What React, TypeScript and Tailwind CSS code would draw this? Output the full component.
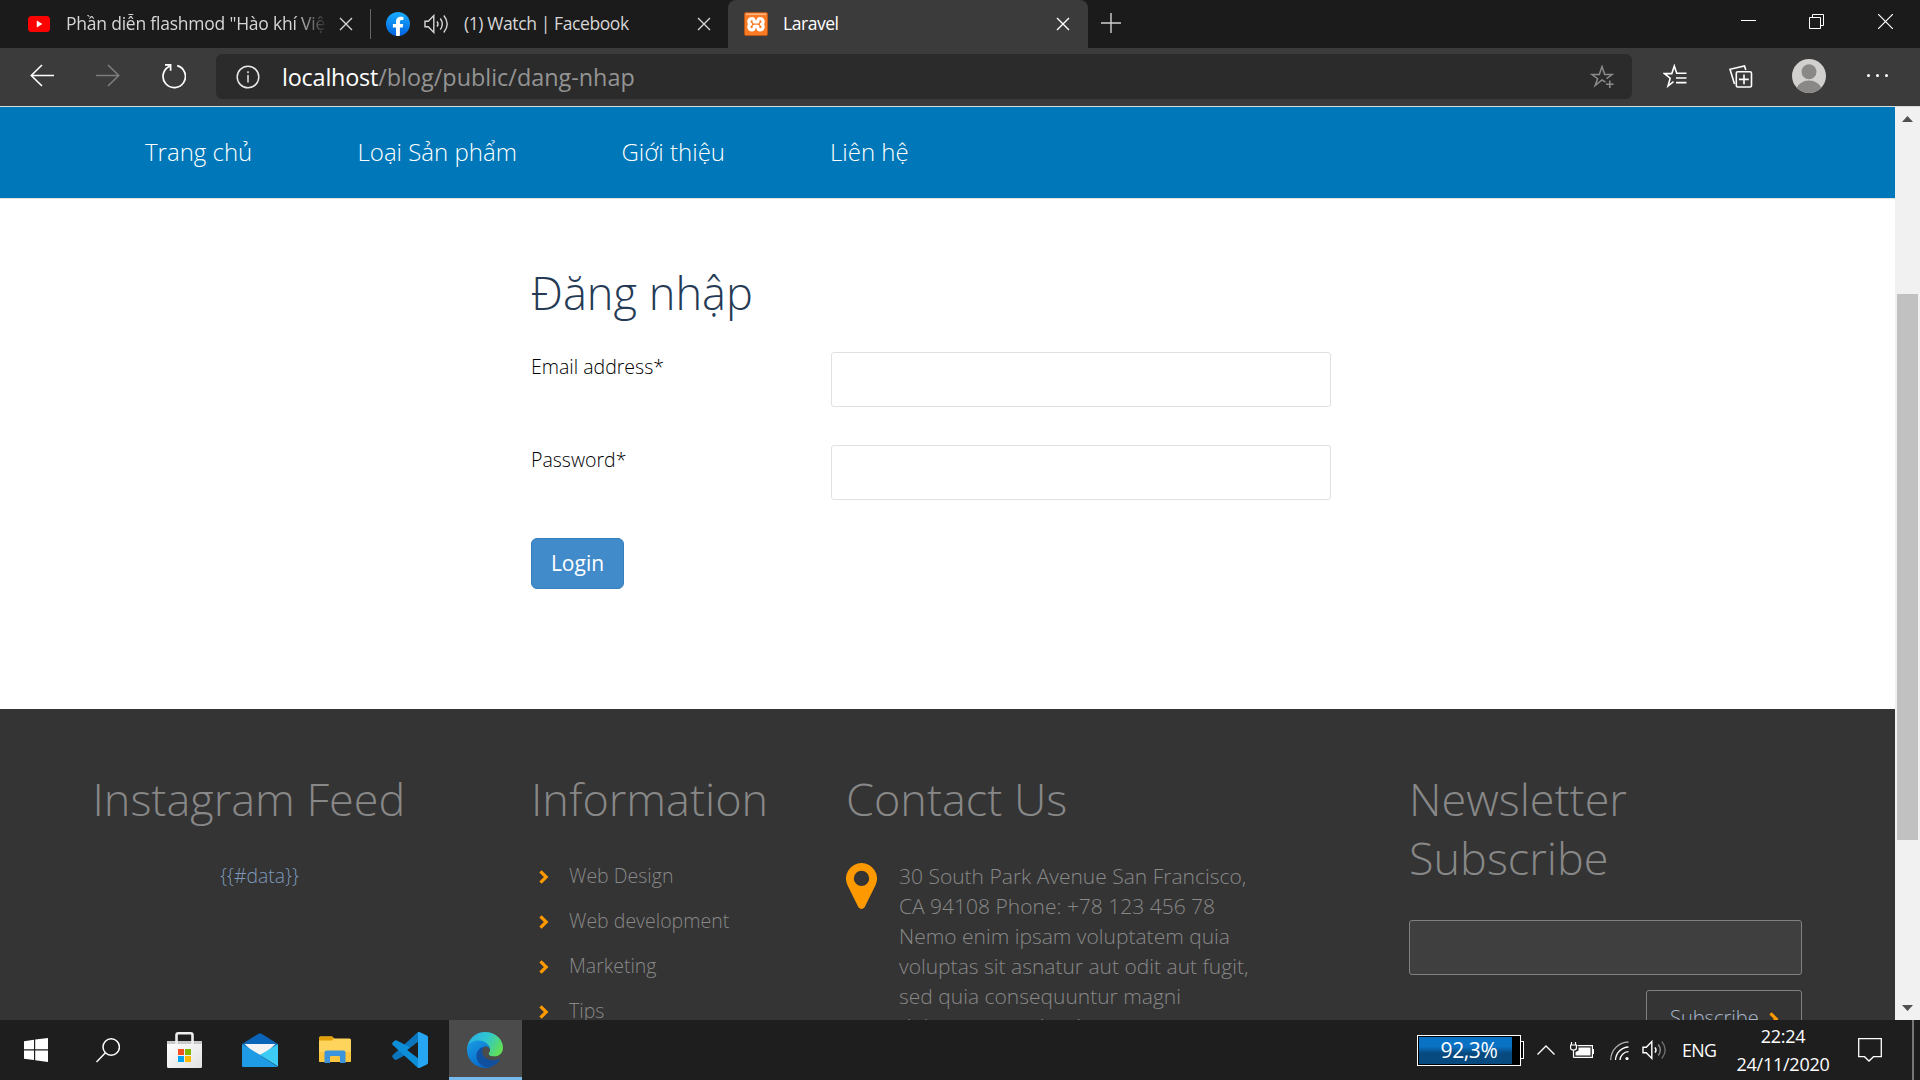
import React from "react";

function CloseIcon({ className }: { className: string }) {
  return (
    <svg className={className} viewBox="0 0 14 14" fill="none" stroke="currentColor" strokeWidth="1.4">
      <path d="M1 1 13 13M13 1 1 13" />
    </svg>
  );
}

function SoundIcon({ className, dim }: { className: string; dim?: boolean }) {
  return (
    <svg className={className} viewBox="0 0 25 20" fill="none" stroke="currentColor" strokeWidth="1.4">
      <path d="M1 7.2H4.3L9.8 1.6V18.4L4.3 12.8H1Z" />
      <path d="M13 7.3Q15 10 13 12.7" />
      <path d="M16.3 4.5Q20.3 10 16.3 15.5" opacity={dim ? 0.5 : 1} />
      <path d="M19.8 1.5Q26.6 10 19.8 18.5" opacity={dim ? 0.35 : 1} />
    </svg>
  );
}

function TabStrip() {
  return (
    <div className="flex h-12 items-start bg-[#1b1b1b] text-[17.5px] leading-[46px] text-[#d6d6d6]">
      <div className="flex h-12 w-[370px] items-center pl-7">
        <svg className="h-4 w-[22px]" viewBox="0 0 22 16">
          <rect width="22" height="16" rx="3.5" fill="#f00" />
          <path d="M8.8 4.6 14.3 8 8.8 11.4Z" fill="#fff" />
        </svg>
        <div className="ml-4 h-12 w-[260px] overflow-hidden whitespace-nowrap tracking-[-0.22px] [mask-image:linear-gradient(to_right,black_88%,transparent_101%)]">
          Phần diễn flashmod "Hào khí Việ
        </div>
        <CloseIcon className="ml-[13px] h-3.5 w-3.5" />
      </div>
      <div className="mt-[9px] h-[30px] w-px bg-[#666]" />
      <div className="flex h-12 w-[357px] items-center pl-[15px]">
        <svg className="h-6 w-6" viewBox="0 0 24 24">
          <defs>
            <linearGradient id="fb" x1="0" y1="0" x2="0" y2="1">
              <stop offset="0" stopColor="#18acfe" />
              <stop offset="1" stopColor="#0163e0" />
            </linearGradient>
          </defs>
          <circle cx="12" cy="12" r="12" fill="url(#fb)" />
          <path d="M16.7 15.4 17.2 12H13.9V9.7C13.9 8.7 14.3 7.9 15.8 7.9H17.4V5C16.5 4.8 15.5 4.7 14.6 4.7 11.8 4.7 10 6.4 10 9.4V12H6.9V15.4H10V23.8A12 12 0 0 0 13.9 23.8V15.4Z" fill="#fff" />
        </svg>
        <SoundIcon className="ml-3.5 h-5 w-[25px]" />
        <div className="ml-[15px] h-12 w-[218px] whitespace-nowrap tracking-[-0.4px]">(1) Watch | Facebook</div>
        <CloseIcon className="ml-[15px] h-3.5 w-3.5" />
      </div>
      <div className="flex h-12 w-[360px] items-center rounded-t-lg bg-[#3b3b3b] pl-4 text-white">
        <svg className="h-6 w-6" viewBox="0 0 24 24">
          <rect x=".5" y=".5" width="23" height="23" rx="1.5" fill="#fb7a24" stroke="#b8571a" />
          <path d="M2 2.2H22" stroke="#ffb98a" strokeWidth="1.5" />
          <path d="M8 6.7C4.3 6.7 4 11.2 6.5 12.2 4 13.3 4.3 17.8 8 17.8 10 17.8 10.2 16.4 10.2 14.4H13.8C13.8 16.4 14 17.8 16 17.8 19.7 17.8 20 13.3 17.5 12.2 20 11.2 19.7 6.7 16 6.7 14 6.7 13.8 8 13.8 10H10.2C10.2 8 10 6.7 8 6.7Z" fill="none" stroke="#fff" strokeWidth="3.2" strokeLinejoin="round" />
        </svg>
        <div className="ml-[15px] h-12 w-[260px] tracking-[-0.45px]">Laravel</div>
        <CloseIcon className="ml-[13px] h-3.5 w-3.5" />
      </div>
      <svg className="ml-[13px] mt-[13px] h-5 w-5" viewBox="0 0 20 20" stroke="#d0d0d0" strokeWidth="1.4">
        <path d="M10 0V20M0 10H20" />
      </svg>
      <div className="ml-auto mr-[27px] mt-3.5 flex items-start text-white">
        <div className="mt-1.5 h-px w-[15px] bg-white" />
        <svg className="ml-[53px] h-[15px] w-[15px]" viewBox="0 0 15 15" fill="none" stroke="#fff">
          <path d="M.5 3.5H11.5V14.5H.5ZM3.5 3V.5H14.5V11.5H12" />
        </svg>
        <svg className="ml-[54px] h-[15px] w-[15px]" viewBox="0 0 15 15" stroke="#fff" strokeWidth="1.2">
          <path d="M0 0 15 15M15 0 0 15" />
        </svg>
      </div>
    </div>
  );
}

function Toolbar() {
  return (
    <div className="flex h-[59px] items-start border-b border-[#dcdcdc] bg-[#3b3b3b] text-white">
      <svg className="ml-[30px] mt-4 h-[23px] w-6" viewBox="0 0 24 23" fill="none" stroke="#fff" strokeWidth="1.6">
        <path d="M12 1 1.3 11.5 12 22M1.3 11.5H24" />
      </svg>
      <svg className="ml-[42px] mt-4 h-[23px] w-6" viewBox="0 0 24 23" fill="none" stroke="#7d7d7d" strokeWidth="1.6">
        <path d="M12 1 22.7 11.5 12 22M22.7 11.5H0" />
      </svg>
      <svg className="ml-[42px] mt-4 h-[25px] w-6" viewBox="0 0 24 25" fill="none" stroke="#fff" strokeWidth="1.7">
        <path d="M15.2 1.6A11.2 11.2 0 1 1 7.6 2.2M3 .9H8.6V6.8" />
      </svg>
      <div className="ml-[30px] mt-1.5 flex h-[45px] w-[1416px] items-center rounded-md bg-[#2b2b2b] pl-5">
        <svg className="h-6 w-6" viewBox="0 0 24 24" fill="none" stroke="#e6e6e6" strokeWidth="1.5">
          <circle cx="12" cy="12" r="10.8" />
          <path d="M12 10V17.5M12 6.3V8.3" />
        </svg>
        <div className="ml-[22px] w-[1308px] whitespace-nowrap pt-0.5 text-[23.4px] leading-[45px] text-[#949494]">
          <span className="tracking-[-0.2px] text-white">localhost</span>/blog/public/dang-nhap
        </div>
        <svg className="h-6 w-6" viewBox="0 0 24 24" fill="none" stroke="#8b8b8b" strokeWidth="1.5">
          <path d="M15.5 17.2 12 14.9 5.2 20.5 7.6 13.7 1.8 9.5H9.3L12 1.5 14.7 9.5H22.2L16.6 13.7M19.8 15.5V23M16 19.3H23.6" />
        </svg>
      </div>
      <svg className="ml-[31px] mt-4 h-6 w-6" viewBox="0 0 24 24" fill="none" stroke="#fff" strokeWidth="1.6">
        <path d="M10.5 17.6 5 22 7.2 14.2 1.5 9.6H8.8L11.3 2 13.7 9.3H23.5M13 14H23.5M13 18.6H23.5" />
      </svg>
      <svg className="ml-[42px] mt-[17px] h-[23px] w-6" viewBox="0 0 24 23" fill="none" stroke="#fff" strokeWidth="1.6">
        <rect x="7.3" y="6.8" width="15.2" height="15.2" rx="1.5" />
        <path d="M15 9.5V19.3M10 14.4H19.8M5.5 19 1 4.3 15.5 1 16.8 5" />
      </svg>
      <svg className="ml-[39px] mt-[11px] h-[34px] w-[34px]" viewBox="0 0 34 34">
        <defs>
          <clipPath id="av"><circle cx="17" cy="17" r="17" /></clipPath>
        </defs>
        <circle cx="17" cy="17" r="17" fill="#d2d0ce" />
        <g clipPath="url(#av)" fill="#8a8886">
          <circle cx="17" cy="12.7" r="7.5" />
          <ellipse cx="17" cy="33" rx="13" ry="11.5" />
        </g>
      </svg>
      <div className="ml-[41px] mt-[26px] flex gap-[6px]">
        <div className="h-[3px] w-[3px] rounded-full bg-white" />
        <div className="h-[3px] w-[3px] rounded-full bg-white" />
        <div className="h-[3px] w-[3px] rounded-full bg-white" />
      </div>
    </div>
  );
}

function Chevron({ className }: { className: string }) {
  return (
    <svg className={className} viewBox="0 0 10 14" fill="none" stroke="#ff9900" strokeWidth="3.2">
      <path d="M1.5 1.3 7.2 7 1.5 12.7" />
    </svg>
  );
}

function LoginForm() {
  return (
    <main className="h-[510px] bg-white pl-[531px] pt-16">
      <h2 className="text-[45.2px] leading-[59px] text-[#253a54]">Đăng nhập</h2>
      <div className="mt-[30px] flex">
        <label className="w-[300px] text-[19.5px] leading-[30px] text-black">Email address*</label>
        <input className="h-[55px] w-[500px] rounded-[3px] border border-[#e1e1e1]" />
      </div>
      <div className="mt-[38px] flex">
        <label className="w-[300px] text-[19.5px] leading-[30px] text-black">Password*</label>
        <input className="h-[55px] w-[500px] rounded-[3px] border border-[#e1e1e1]" />
      </div>
      <button className="mt-[38px] h-[51px] w-[93px] rounded-md border border-[#357ebd] bg-[#428bca] text-[21px] font-normal text-white">
        Login
      </button>
    </main>
  );
}

const links = ["Web Design", "Web development", "Marketing", "Tips"];

function Footer() {
  return (
    <footer className="flex h-[311px] items-start overflow-hidden bg-[#343434] pt-[60px] text-[#888]">
      <section className="ml-[92.5px] w-[438.5px]">
        <h4 className="text-[45px] leading-[59px]">Instagram Feed</h4>
        <p className="mt-[34px] w-[334px] text-center text-[19.4px] leading-7 text-[#7e99ba]">{"{{#data}}"}</p>
      </section>
      <section className="w-[315px]">
        <h4 className="text-[45px] leading-[59px]">Information</h4>
        <ul className="mt-[25px] pl-2">
          {links.map((l) => (
            <li key={l} className="flex h-[45px] items-center text-[19.5px]">
              <Chevron className="mt-0.5 h-3.5 w-2.5" />
              <span className="ml-5">{l}</span>
            </li>
          ))}
        </ul>
      </section>
      <section className="w-[563px]">
        <h4 className="text-[45px] leading-[59px]">Contact Us</h4>
        <div className="mt-[33px] flex items-start">
          <svg className="mt-0.5 h-[46px] w-[31px]" viewBox="0 0 31 46">
            <path fill="#ff9900" fillRule="evenodd" d="M15.5 0A15.5 15.5 0 0 0 1.4 22L12.4 44.2Q15.5 47.6 18.6 44.2L29.6 22A15.5 15.5 0 0 0 15.5 0ZM15.5 7.7A7.7 7.7 0 1 1 15.5 23.1 7.7 7.7 0 0 1 15.5 7.7Z" />
          </svg>
          <p className="ml-[22px] whitespace-nowrap text-[21px] leading-[30px]">
            30 South Park Avenue San Francisco,<br />
            CA 94108 Phone: +78 123 456 78<br />
            Nemo enim ipsam voluptatem quia<br />
            voluptas sit asnatur aut odit aut fugit,<br />
            sed quia consequuntur magni<br />
            dolores eos qui ratione
          </p>
        </div>
      </section>
      <section className="w-[393px]">
        <h4 className="text-[45px] leading-[59px]">Newsletter<br />Subscribe</h4>
        <input className="mt-[33px] block h-[55px] w-[393px] rounded-[3px] border border-[#818181] bg-[#3f3f3f]" />
        <button className="ml-auto mt-[15px] flex h-[55px] w-[156px] items-center rounded-[3px] border border-[#818181] pl-[23px] text-[20px] text-[#a8b7cc]">
          <span className="w-[87px] text-left">Subscribe</span>
          <Chevron className="ml-3 mt-0.5 h-3.5 w-2.5" />
        </button>
      </section>
    </footer>
  );
}

function Page() {
  return (
    <div className="flex h-[913px] font-['Open_Sans',sans-serif] font-light">
      <div className="w-[1895px]">
        <nav className="flex h-[92px] items-center border-b border-[#dfe3e6] bg-[#0077b8] pb-0.5 pl-[145px] text-[24px] text-white">
          <a className="w-[212.5px]">Trang chủ</a>
          <a className="w-[264px]">Loại Sản phẩm</a>
          <a className="w-[208.5px]">Giới thiệu</a>
          <a>Liên hệ</a>
        </nav>
        <LoginForm />
        <Footer />
      </div>
      <div className="flex w-[25px] flex-col items-center justify-between bg-[#f1f1f1] pb-[9px] pt-[9px]">
        <svg className="h-1.5 w-[11px]" viewBox="0 0 11 6"><path d="M0 6 5.5 0 11 6Z" fill="#505050" /></svg>
        <div className="mb-[165px] mt-[172px] w-[21px] grow bg-[#c1c1c1]" />
        <svg className="h-1.5 w-[11px]" viewBox="0 0 11 6"><path d="M0 0 5.5 6 11 0Z" fill="#505050" /></svg>
      </div>
    </div>
  );
}

function Taskbar() {
  return (
    <div className="flex h-[60px] items-center bg-[#1e1e1e] text-white">
      <svg className="ml-6 h-6 w-6" viewBox="0 0 24 24" fill="#fff">
        <path d="M0 3.3 10 1.8V11.3H0ZM11.2 1.6 24 0V11.3H11.2ZM0 12.5H10V22.1L0 20.7ZM11.2 12.5H24V24L11.2 22.3Z" />
      </svg>
      <svg className="ml-12 h-[25px] w-6" viewBox="0 0 24 25" fill="none" stroke="#fff" strokeWidth="1.5">
        <circle cx="15.2" cy="9" r="8.2" />
        <path d="M9.4 14.8.5 24" />
      </svg>
      <svg className="ml-[47px] h-9 w-[35px]" viewBox="0 0 35 36">
        <defs>
          <linearGradient id="bag" x1="0" y1="0" x2="1" y2="1"><stop offset="0" stopColor="#fff" /><stop offset="1" stopColor="#e2e2e2" /></linearGradient>
        </defs>
        <path d="M0 9H35V34.5Q35 36 33.5 36H1.5Q0 36 0 34.5Z" fill="url(#bag)" />
        <path d="M0 9H35V12H0Z" fill="#c9c9c9" />
        <path d="M9.5 12V3Q9.5 1.3 11.2 1.3H23.8Q25.5 1.3 25.5 3V12" fill="none" stroke="#eee" strokeWidth="2.6" />
        <path d="M11 17H17V23H11Z" fill="#f25022" /><path d="M18 17H24V23H18Z" fill="#7fba00" />
        <path d="M11 24H17V30H11Z" fill="#00a4ef" /><path d="M18 24H24V30H18Z" fill="#ffb900" />
      </svg>
      <svg className="ml-10 h-[34px] w-9" viewBox="0 0 36 34">
        <path d="M0 11 16.5 .8Q18 0 19.5 .8L36 11 18 24Z" fill="#0a64b8" />
        <path d="M2.5 11H33.5L26 18 18 22 10 18Z" fill="#f3f3f3" />
        <path d="M0 11 18 22 36 34H1.5Q0 34 0 32.5Z" fill="#1e9be4" />
        <path d="M36 11V33.5L18 22Z" fill="#3ccbf4" />
      </svg>
      <svg className="ml-[41px] h-7 w-8" viewBox="0 0 32 28">
        <path d="M0 2Q0 .5 1.5 .5H13L15.5 2.5H30.5Q32 2.5 32 4V24.5Q32 26 30.5 26H1.5Q0 26 0 24.5Z" fill="#ffd45c" />
        <path d="M0 4.5V2Q0 .5 1.5 .5H13L15 2.5 13 4.5Z" fill="#e3a008" />
        <path d="M0 16H32V24.5Q32 26 30.5 26H1.5Q0 26 0 24.5Z" fill="#fbc540" />
        <path d="M5.5 27V16.5Q5.5 14.5 7.5 14.5H24.5Q26.5 14.5 26.5 16.5V27H21V21Q21 20 20 20H12Q11 20 11 21V27Z" fill="#3c94dc" />
      </svg>
      <svg className="ml-[41px] h-9 w-9" viewBox="0 0 36 36">
        <path d="M26 0 36 4.5V11L5 27.5Q3.5 28.5 2.3 27.2L.7 25.5Q-.4 24.3 .8 23Z" fill="#0b76bd" />
        <path d="M26 36 36 31.5V25L5 8.6Q3.5 7.6 2.3 8.9L.7 10.5Q-.4 11.7 .8 13Z" fill="#0d8ed8" />
        <path d="M26 .2Q27 -.3 28 .3L34.8 3.5Q36 4.2 36 5.4V30.6Q36 31.8 34.8 32.5L28 35.7Q27 36.3 26 35.5Z" fill="#25a5f2" />
        <path d="M26 9.8V26.2L15.2 18Z" fill="#1e1e1e" />
      </svg>
      <div className="ml-[21px] flex h-[60px] w-[73px] flex-col items-center border-b-[3px] border-[#76b9ed] bg-[#4b4b4b] pr-[2px] pt-3">
        <svg className="h-9 w-9" viewBox="0 0 36 36">
          <defs>
            <linearGradient id="e1" x1="0" y1=".2" x2="1" y2=".6"><stop offset="0" stopColor="#2aaee6" /><stop offset=".5" stopColor="#2fc6d0" /><stop offset="1" stopColor="#63e052" /></linearGradient>
            <linearGradient id="e2" x1="0" y1="0" x2=".6" y2="1"><stop offset="0" stopColor="#1b9de2" /><stop offset="1" stopColor="#0669cc" /></linearGradient>
          </defs>
          <path d="M0 18A18 18 0 0 1 18 0C28.5 0 36 7.5 36 15.5 36 21.5 31.5 24.5 27 24.5 23 24.5 21 23 21.5 21.5 24 18 22 14 18 13Z" fill="url(#e1)" />
          <path d="M0 18C0 11 6 8.5 11.5 8.5 18 8.5 23 13 23 17.5L18 15C11 18 12 31 23 35.2A18 18 0 0 1 0 18Z" fill="url(#e2)" />
          <path d="M17.5 14.5C11 16 7.5 22 10.5 28.5 14 35.5 21 36.5 25 34.5 28 33 31.5 30.5 33 27.5 33.2 26.8 32.7 26.5 32 26.9 24 30.5 15.5 26.5 15.5 19.5 15.5 17.5 16.2 15.7 17.5 14.5Z" fill="#11509f" />
          <path d="M17.8 14.6C20.5 14 23 15.7 23 18.2 23 20 21.5 20.8 21.5 22 21.5 23.5 23.5 24.6 27 24.6L29.5 27.7C22 29.5 15.5 25.5 15.5 19.5 15.5 17.5 16.3 15.7 17.8 14.6Z" fill="#4b4b4b" />
        </svg>
      </div>

      <div className="ml-auto flex h-[31px] w-[104px] items-center border border-white bg-black p-px">
        <div className="flex h-full w-[93px] items-center justify-center bg-linear-to-b from-[#0a72c4] from-35% to-[#064a80] to-60% pl-[7px] pt-0.5 text-[21px] tracking-[-0.4px]">92,3%</div>
      </div>
      <div className="h-[18px] w-[3px] border border-l-0 border-white bg-black" />
      <svg className="ml-[13px] h-2.5 w-[18px]" viewBox="0 0 18 10" fill="none" stroke="#fff" strokeWidth="1.4"><path d="M.5 9.5 9 1 17.5 9.5" /></svg>
      <svg className="ml-[15px] h-[17px] w-6" viewBox="0 0 24 17" fill="none" stroke="#fff" strokeWidth="1.2">
        <path d="M7.5 3.6H22.4V15.4H3.5M23.4 7V12" />
        <path d="M8.5 5.5H20.5V13.5H5.5V10L8.5 8.5Z" fill="#fff" stroke="none" />
        <path d="M1.5 0V3M5.5 0V3M.6 3H6.4V6Q6.4 8 3.5 8 .6 8 .6 6ZM3.5 8V15.4" />
      </svg>
      <svg className="ml-4 h-[19px] w-[19px]" viewBox="0 0 19 19" fill="none" stroke="#fff" strokeWidth="1.3">
        <path d="M.7 19A18 18 0 0 1 18.5 1" opacity=".65" />
        <path d="M5.5 19A13.5 13.5 0 0 1 18.5 6M10 19A8.7 8.7 0 0 1 18.5 10.7" />
        <circle cx="17" cy="17.5" r="1.6" fill="#fff" stroke="none" />
      </svg>
      <SoundIcon className="ml-[13px] h-5 w-[25px]" dim />
      <div className="ml-[15px] w-[36px] whitespace-nowrap text-[17.8px] tracking-[-0.6px]">ENG</div>
      <div className="ml-4 w-[98px] whitespace-nowrap text-center text-[18px] leading-[28px] tracking-[-0.25px]">
        22:24<br />24/11/2020
      </div>
      <svg className="ml-[26px] h-6 w-6" viewBox="0 0 24 24" fill="none" stroke="#fff" strokeWidth="1.3">
        <path d="M.7 .7H23.3V18.7H15.5L11 23 6.5 18.7H.7Z" />
      </svg>
      <div className="ml-[30px] mr-[6px] h-[60px] w-0.5 bg-[#777]" />
    </div>
  );
}

export default function App() {
  return (
    <div className="h-[1080px] w-[1920px] overflow-hidden font-['Open_Sans',sans-serif]">
      <TabStrip />
      <Toolbar />
      <Page />
      <Taskbar />
    </div>
  );
}
